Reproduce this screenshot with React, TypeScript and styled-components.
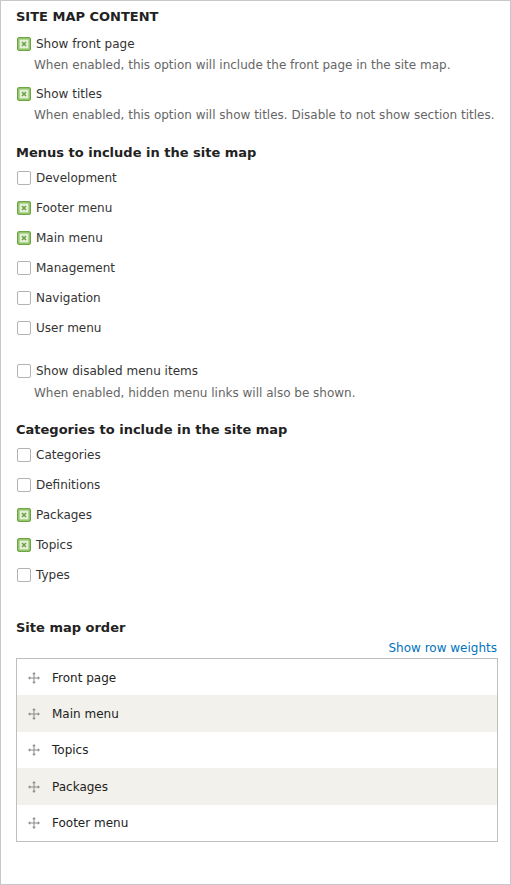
import React from "react";
import styled, { createGlobalStyle } from "styled-components";

const Global = createGlobalStyle`
  html, body { margin: 0; padding: 0; background: #fff; }
  body { font-family: "DejaVu Sans", "Liberation Sans", sans-serif; color: #333; }
  * { box-sizing: border-box; }
`;

const Page = styled.div`
  width: 511px;
  min-height: 885px;
  border: 1px solid #c8c8c8;
  padding: 7px 12px 42px 15px;
  display: flex;
  flex-direction: column;
`;

const Heading = styled.h3<{ $upper?: boolean; $mt?: number }>`
  margin: ${(p) => p.$mt ?? 0}px 0 0 0;
  font-size: 13px;
  line-height: 18px;
  font-weight: bold;
  color: #222;
  text-transform: ${(p) => (p.$upper ? "uppercase" : "none")};
`;

const Item = styled.div<{ $mt: number }>`
  margin-top: ${(p) => p.$mt}px;
  display: flex;
  flex-direction: column;
`;

const Row = styled.label`
  display: flex;
  align-items: center;
  height: 18px;
  font-size: 12px;
  color: #333;
  gap: 5px;
  padding-left: 1px;
`;

const Box = styled.span<{ $on: boolean }>`
  width: 14px;
  height: 14px;
  border-radius: 2px;
  border: 1px solid ${(p) => (p.$on ? "#6ea546" : "#b3b3b3")};
  background: ${(p) => (p.$on ? "#92c46c" : "#fff")};
  display: flex;
  align-items: center;
  justify-content: center;
  flex: none;
`;

const Desc = styled.div<{ $mt: number }>`
  margin-top: ${(p) => p.$mt}px;
  padding-left: 18px;
  font-size: 12px;
  line-height: 18px;
  color: #666;
  white-space: nowrap;
`;

const List = styled.div<{ $mt: number }>`
  margin-top: ${(p) => p.$mt}px;
  display: flex;
  flex-direction: column;
  gap: 12px;
`;

const LinkBar = styled.div`
  margin-top: 2px;
  display: flex;
  justify-content: flex-end;
  font-size: 12px;
  line-height: 18px;
  padding-right: 1px;
`;

const Link = styled.a`
  color: #0074bd;
  text-decoration: none;
`;

const Table = styled.div`
  margin-top: 1px;
  border: 1px solid #bfbfbf;
  display: flex;
  flex-direction: column;
`;

const TRow = styled.div<{ $odd: boolean }>`
  height: 36.4px;
  display: flex;
  align-items: center;
  padding: 1px 0 0 11px;
  gap: 12px;
  font-size: 12px;
  color: #222;
  background: ${(p) => (p.$odd ? "#f2f1eb" : "#fff")};
`;

const Check = ({ on }: { on: boolean }) => (
  <Box $on={on}>
    {on && (
      <svg width="10" height="10" viewBox="0 0 10 10">
        <rect x="0.5" y="0.5" width="9" height="9" rx="1" fill="#e4f1d6" stroke="#b5d89a" />
        <path d="M3 3 L7 7 M7 3 L3 7" stroke="#6e9e4a" strokeWidth="1.6" />
      </svg>
    )}
  </Box>
);

const DragHandle = () => (
  <svg width="12" height="12" viewBox="0 0 12 12" fill="#8a8a8a">
    <rect x="5.5" y="1.5" width="1" height="9" />
    <rect x="1.5" y="5.5" width="9" height="1" />
    <path d="M6 0 L7.8 2.2 H4.2 Z M6 12 L7.8 9.8 H4.2 Z M0 6 L2.2 4.2 V7.8 Z M12 6 L9.8 4.2 V7.8 Z" />
  </svg>
);

const Option = ({ label, on }: { label: string; on: boolean }) => (
  <Row>
    <Check on={on} />
    {label}
  </Row>
);

const menus: [string, boolean][] = [
  ["Development", false],
  ["Footer menu", true],
  ["Main menu", true],
  ["Management", false],
  ["Navigation", false],
  ["User menu", false],
];

const categories: [string, boolean][] = [
  ["Categories", false],
  ["Definitions", false],
  ["Packages", true],
  ["Topics", true],
  ["Types", false],
];

const order = ["Front page", "Main menu", "Topics", "Packages", "Footer menu"];

export default function App() {
  return (
    <>
      <Global />
      <Page>
        <Heading $upper>Site map content</Heading>
        <Item $mt={9}>
          <Option label="Show front page" on />
          <Desc $mt={3}>When enabled, this option will include the front page in the site map.</Desc>
        </Item>
        <Item $mt={11}>
          <Option label="Show titles" on />
          <Desc $mt={3}>When enabled, this option will show titles. Disable to not show section titles.</Desc>
        </Item>

        <Heading $mt={20}>Menus to include in the site map</Heading>
        <List $mt={7}>
          {menus.map(([l, on]) => (
            <Option key={l} label={l} on={on} />
          ))}
        </List>
        <Item $mt={25}>
          <Option label="Show disabled menu items" on={false} />
          <Desc $mt={4}>When enabled, hidden menu links will also be shown.</Desc>
        </Item>

        <Heading $mt={19}>Categories to include in the site map</Heading>
        <List $mt={7}>
          {categories.map(([l, on]) => (
            <Option key={l} label={l} on={on} />
          ))}
        </List>

        <Heading $mt={35}>Site map order</Heading>
        <LinkBar>
          <Link href="#">Show row weights</Link>
        </LinkBar>
        <Table>
          {order.map((l, i) => (
            <TRow key={l} $odd={i % 2 === 1}>
              <DragHandle />
              {l}
            </TRow>
          ))}
        </Table>
      </Page>
    </>
  );
}
